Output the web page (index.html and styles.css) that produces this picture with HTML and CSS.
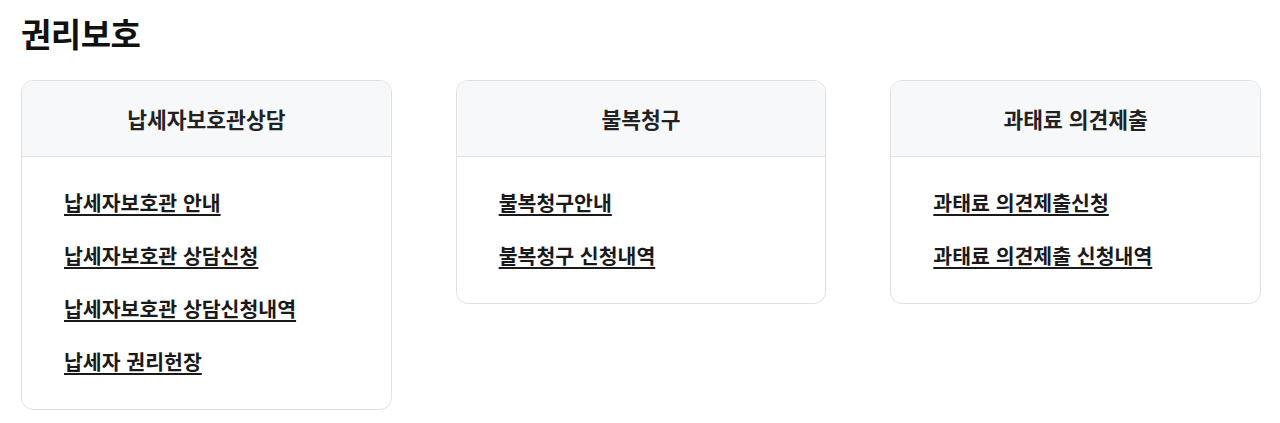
FILE: index.html
```html
<!DOCTYPE html>
<html lang="ko">
<head>
    <meta charset="UTF-8">
    <meta name="viewport" content="width=device-width, initial-scale=1.0">
    <title>권리보호</title>
    <link rel="stylesheet" href="styles.css">
</head>
<body>
    <div class="container">
        <h1>권리보호</h1>
        <div class="cards">
            <div class="card">
                <div class="card-head">납세자보호관상담</div>
                <ul class="card-list">
                    <li><a href="#">납세자보호관 안내</a></li>
                    <li><a href="#">납세자보호관 상담신청</a></li>
                    <li><a href="#">납세자보호관 상담신청내역</a></li>
                    <li><a href="#">납세자 권리헌장</a></li>
                </ul>
            </div>
            <div class="card">
                <div class="card-head">불복청구</div>
                <ul class="card-list">
                    <li><a href="#">불복청구안내</a></li>
                    <li><a href="#">불복청구 신청내역</a></li>
                </ul>
            </div>
            <div class="card">
                <div class="card-head">과태료 의견제출</div>
                <ul class="card-list">
                    <li><a href="#">과태료 의견제출신청</a></li>
                    <li><a href="#">과태료 의견제출 신청내역</a></li>
                </ul>
            </div>
        </div>
    </div>
</body>
</html>
```

FILE: styles.css
```css
body {
    margin: 0;
    padding: 0;
    background: #fff;
    font-family: "Noto Sans CJK KR", "Noto Sans", sans-serif;
    color: #222;
}

.container {
    width: 1240px;
    padding: 11px 20px 0 21px;
}

h1 {
    margin: 0 0 25px;
    font-size: 33px;
    font-weight: 700;
    color: #111;
    line-height: 44px;
    letter-spacing: -0.5px;
}

.cards {
    display: grid;
    grid-template-columns: repeat(3, 1fr);
    gap: 64px;
    align-items: start;
}

.card {
    border: 1px solid #e1e1e1;
    border-radius: 12px;
    overflow: hidden;
}

.card-head {
    background: #f7f8fa;
    border-bottom: 1px solid #e1e1e1;
    height: 75px;
    display: flex;
    align-items: center;
    justify-content: center;
    font-size: 21.5px;
    font-weight: 600;
    color: #222;
}

.card-list {
    list-style: none;
    margin: 0;
    padding: 19px 42px 21px;
}

.card-list li {
    height: 53px;
    line-height: 53px;
}

.card-list a {
    font-size: 20.5px;
    font-weight: 600;
    color: #1a1a1a;
    text-decoration: underline;
    text-underline-offset: 3px;
}
```
